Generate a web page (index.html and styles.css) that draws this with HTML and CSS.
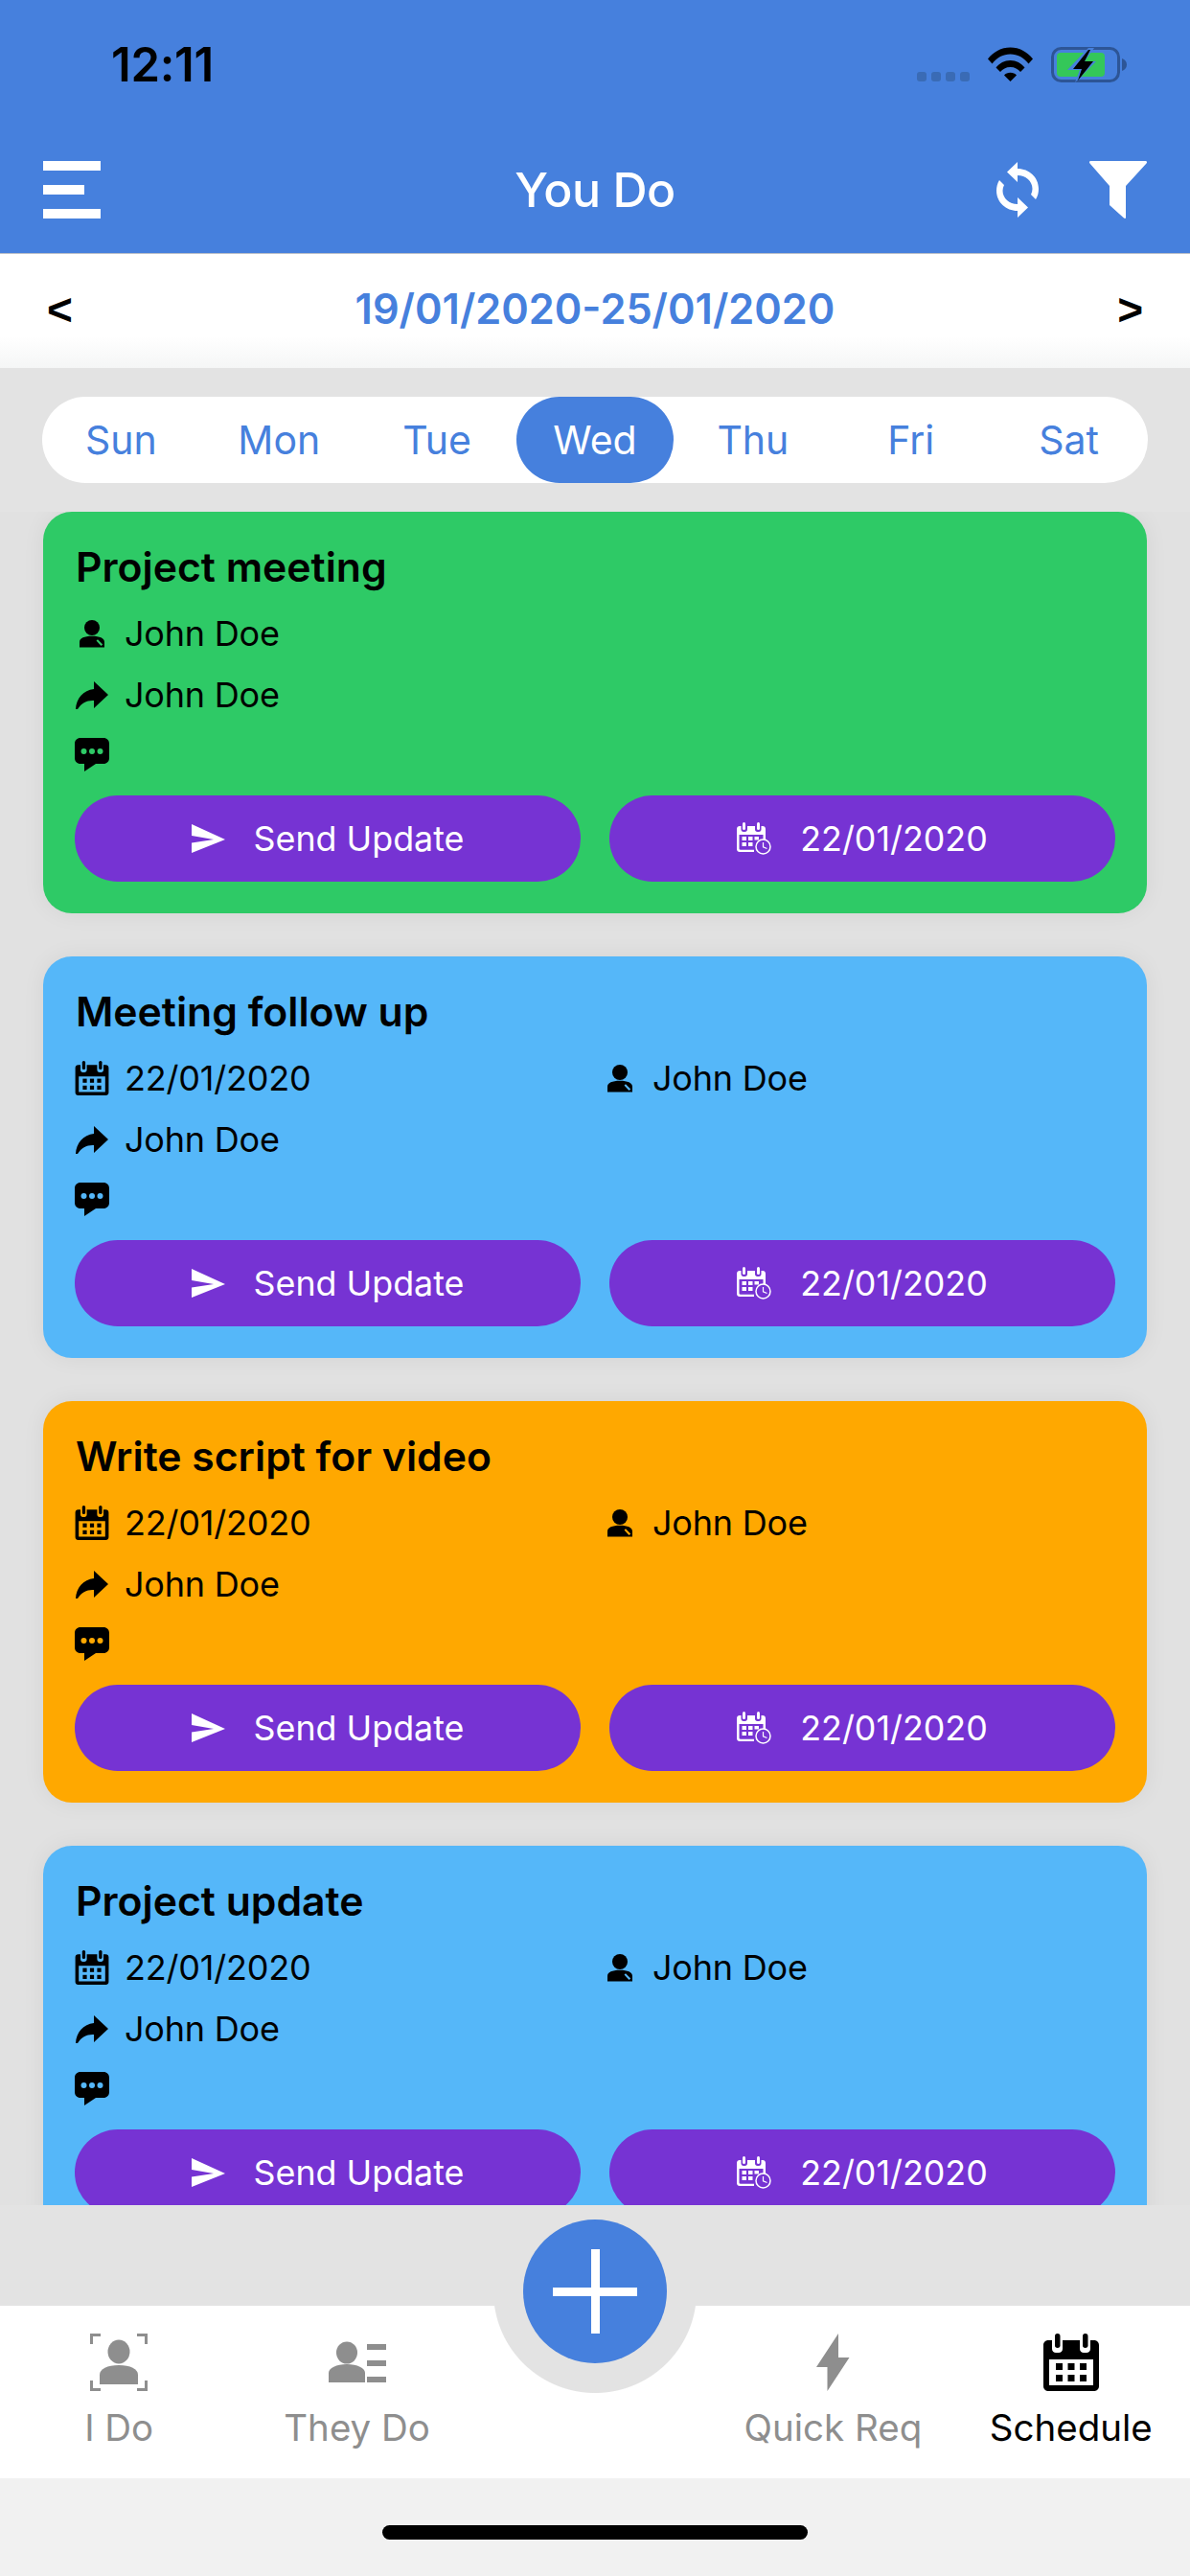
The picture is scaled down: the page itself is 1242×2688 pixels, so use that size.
FILE: index.html
```html
<!DOCTYPE html>
<html lang="en">
<head>
<meta charset="utf-8">
<title>You Do</title>
<link rel="stylesheet" href="styles.css">
</head>
<body>
<svg class="defs" width="0" height="0" aria-hidden="true">
  <symbol id="i-person" viewBox="0 0 26 29">
    <circle cx="13" cy="8" r="8"/>
    <path d="M0 28.500V23C0 19 5 16.800 13 16.800C21 16.800 26 19 26 23V28.500ZM17.500 21.500L22.500 27L24.200 25.500L19 20.200Z" fill-rule="evenodd"/>
  </symbol>
  <symbol id="i-forward" viewBox="0 0 34 29">
    <path d="M19 0L34 14L19 28V20C12 19.500 6 22.500 2 29H0C.5 18 8 9 19 8Z"/>
  </symbol>
  <symbol id="i-comment" viewBox="0 0 36 35">
    <path d="M6 0H30C33.500 0 36 2.500 36 6V21C36 24.500 33.500 27 30 27H22L10 35V27H6C2.500 27 0 24.500 0 21V6C0 2.500 2.500 0 6 0Z"/>
    <circle class="hole" cx="9.500" cy="14" r="3"/><circle class="hole" cx="18" cy="14" r="3"/><circle class="hole" cx="26.500" cy="14" r="3"/>
  </symbol>
  <symbol id="i-send" viewBox="0 0 35 30">
    <path d="M0 0L35 16L0 30V19.500L23 16L0 12Z"/>
  </symbol>
  <symbol id="i-cal" viewBox="0 0 58 60">
    <path d="M5 7H9V16C9 18.500 11 20 13 20H16C18 20 20 18.500 20 16V7H38V16C38 18.500 40 20 42 20H45C47 20 49 18.500 49 16V7H53C55.800 7 58 9.200 58 12V55C58 57.800 55.800 60 53 60H5C2.200 60 0 57.800 0 55V12C0 9.200 2.200 7 5 7ZM6 27V54H52V27Z" fill-rule="evenodd"/>
    <rect x="12" y="0" width="5.500" height="15" rx="2.700"/><rect x="41" y="0" width="5.500" height="15" rx="2.700"/>
    <rect x="13" y="31" width="7" height="7"/><rect x="25.500" y="31" width="7" height="7"/><rect x="38" y="31" width="7" height="7"/>
    <rect x="13" y="43" width="7" height="7"/><rect x="25.500" y="43" width="7" height="7"/><rect x="38" y="43" width="7" height="7"/>
  </symbol>
  <symbol id="i-calclock" viewBox="0 0 36 34">
    <path d="M3 4H4.500V7.500C4.500 9 5.500 10 7 10H8.500C10 10 11 9 11 7.500V4H19V7.500C19 9 20 10 21.500 10H23C24.500 10 25.500 9 25.500 7.500V4H27C28.700 4 30 5.300 30 7V18H27.500V13H2.500V27.500C2.500 28.300 3 28.700 3.800 28.700H18V31H3C1.300 31 0 29.700 0 28V7C0 5.300 1.300 4 3 4Z"/>
    <rect x="6" y="0" width="3" height="8" rx="1.500"/><rect x="21" y="0" width="3" height="8" rx="1.500"/>
    <rect x="5.500" y="15" width="4.500" height="4"/><rect x="12" y="15" width="4.500" height="4"/><rect x="18.500" y="15" width="4.500" height="3.500"/>
    <rect x="5.500" y="21" width="4.500" height="4"/><rect x="12" y="21" width="4.500" height="4"/>
    <circle cx="27.500" cy="25.500" r="7.500" class="hole" stroke="#fff" stroke-width="1.500"/>
    <path d="M27.500 21V25.800L31.500 27.500" fill="none" stroke="#fff" stroke-width="1.200"/>
  </symbol>
</svg>

<div class="app">
  <header class="topbar">
    <div class="status">
      <span class="clock">12:11</span>
      <div class="status-icons">
        <div class="signal"><i></i><i></i><i></i><i></i></div>
        <svg class="wifi" viewBox="0 0 47 36"><path d="M0 12.500C6 5 14 0.500 23.500 0.500S41 5 47 12.500L42.500 17.500C37.500 11 31 7.500 23.500 7.500S9.500 11 4.500 17.500Z"/><path d="M8.500 21.500C12 17 17.500 14 23.500 14S35 17 38.500 21.500L34 26C31.500 23 28 21 23.500 21S15.500 23 13 26Z"/><path d="M17 29.500C18.500 27.800 20.800 26.800 23.500 26.800S28.500 27.800 30 29.500L23.500 36Z"/></svg>
        <svg class="battery" viewBox="0 0 80 37"><rect x="1.500" y="1.500" width="69" height="34" rx="9" fill="none" stroke="#2d5596" stroke-width="3"/><path d="M74 12C77 13 79 15.500 79 18.500S77 24 74 25Z" fill="#2d5596"/><rect x="6" y="6" width="50" height="25" rx="4" fill="#34c759"/><path d="M36 1L14 24H27L22 37L44 15H32L42 1Z" fill="#4680dd" transform="translate(3 0)"/><path d="M39 3L23 23H32L28 35L44 15H35L41 3Z" fill="#000"/></svg>
      </div>
    </div>
    <div class="toolbar">
      <div class="toolbar-side"><div class="burger"><i></i><i></i><i></i></div></div>
      <h1 class="title">You Do</h1>
      <div class="toolbar-side tools">
        <svg class="refresh" viewBox="0 0 44 58"><path d="M22 0V7C34 7 44 16 44 28C44 32 43 36 41 39L36 34C37 32 37.500 30 37.500 28C37.500 20 30.500 14 22 14V21L11 10.500Z"/><path d="M22 58V51C10 51 0 42 0 30C0 26 1 22 3 19L8 24C7 26 6.500 28 6.500 30C6.500 38 13.500 44 22 44V37L33 47.500Z"/></svg>
        <svg class="funnel" viewBox="0 0 60 60"><path d="M1.500 0H58.500C60 0 60.500 1.500 59.500 2.500L38 26V59C38 60 37 60.300 36 59.500L21 46V26L.5 2.500C-.5 1.500 0 0 1.500 0Z"/></svg>
      </div>
    </div>
  </header>

  <div class="datebar">
    <span class="chev">&lt;</span>
    <span class="range">19/01/2020-25/01/2020</span>
    <span class="chev">&gt;</span>
  </div>

  <div class="days">
    <span class="day">Sun</span><span class="day">Mon</span><span class="day">Tue</span><span class="day is-on">Wed</span><span class="day">Thu</span><span class="day">Fri</span><span class="day">Sat</span>
  </div>

  <main class="list">
    <article class="card card-green">
      <h2 class="card-title">Project meeting</h2>
      <div class="row"><span class="cell"><svg class="ic ic-person"><use href="#i-person"/></svg>John Doe</span></div>
      <div class="row"><span class="cell"><svg class="ic ic-forward"><use href="#i-forward"/></svg>John Doe</span></div>
      <div class="note"><svg class="ic ic-comment"><use href="#i-comment"/></svg></div>
      <div class="actions">
        <button class="pill"><svg class="pill-ic ic-send"><use href="#i-send"/></svg>Send Update</button>
        <button class="pill"><svg class="pill-ic ic-calclock"><use href="#i-calclock"/></svg>22/01/2020</button>
      </div>
    </article>

    <article class="card card-blue">
      <h2 class="card-title">Meeting follow up</h2>
      <div class="row"><span class="cell cell-first"><svg class="ic ic-cal"><use href="#i-cal"/></svg>22/01/2020</span><span class="cell"><svg class="ic ic-person"><use href="#i-person"/></svg>John Doe</span></div>
      <div class="row"><span class="cell"><svg class="ic ic-forward"><use href="#i-forward"/></svg>John Doe</span></div>
      <div class="note"><svg class="ic ic-comment"><use href="#i-comment"/></svg></div>
      <div class="actions">
        <button class="pill"><svg class="pill-ic ic-send"><use href="#i-send"/></svg>Send Update</button>
        <button class="pill"><svg class="pill-ic ic-calclock"><use href="#i-calclock"/></svg>22/01/2020</button>
      </div>
    </article>

    <article class="card card-orange">
      <h2 class="card-title">Write script for video</h2>
      <div class="row"><span class="cell cell-first"><svg class="ic ic-cal"><use href="#i-cal"/></svg>22/01/2020</span><span class="cell"><svg class="ic ic-person"><use href="#i-person"/></svg>John Doe</span></div>
      <div class="row"><span class="cell"><svg class="ic ic-forward"><use href="#i-forward"/></svg>John Doe</span></div>
      <div class="note"><svg class="ic ic-comment"><use href="#i-comment"/></svg></div>
      <div class="actions">
        <button class="pill"><svg class="pill-ic ic-send"><use href="#i-send"/></svg>Send Update</button>
        <button class="pill"><svg class="pill-ic ic-calclock"><use href="#i-calclock"/></svg>22/01/2020</button>
      </div>
    </article>

    <article class="card card-blue">
      <h2 class="card-title">Project update</h2>
      <div class="row"><span class="cell cell-first"><svg class="ic ic-cal"><use href="#i-cal"/></svg>22/01/2020</span><span class="cell"><svg class="ic ic-person"><use href="#i-person"/></svg>John Doe</span></div>
      <div class="row"><span class="cell"><svg class="ic ic-forward"><use href="#i-forward"/></svg>John Doe</span></div>
      <div class="note"><svg class="ic ic-comment"><use href="#i-comment"/></svg></div>
      <div class="actions">
        <button class="pill"><svg class="pill-ic ic-send"><use href="#i-send"/></svg>Send Update</button>
        <button class="pill"><svg class="pill-ic ic-calclock"><use href="#i-calclock"/></svg>22/01/2020</button>
      </div>
    </article>
  </main>

  <nav class="tabs">
    <button class="fab" aria-label="Add"></button>
    <div class="tab">
      <svg class="tab-ic" width="60" height="60" viewBox="0 0 60 60"><path d="M0 0H11V3H3V11H0ZM49 0H60V11H57V3H49ZM0 49H3V57H11V60H0ZM57 49H60V60H49V57H57Z"/><ellipse cx="30" cy="19" rx="11.500" ry="12.500"/><path d="M10 53V43C10 37 18 33 30 33S50 37 50 43V53Z"/></svg>
      <span class="tab-label">I Do</span>
    </div>
    <div class="tab">
      <svg class="tab-ic" width="60" height="60" viewBox="0 0 60 60"><ellipse cx="19" cy="20" rx="11" ry="11.500"/><path d="M0 51V41C0 36 8 32 19 32S38 36 38 41V51Z"/><rect x="40" y="11" width="20" height="6"/><rect x="40" y="28" width="20" height="6"/><rect x="40" y="45" width="20" height="6"/></svg>
      <span class="tab-label">They Do</span>
    </div>
    <div class="tab tab-gap"></div>
    <div class="tab">
      <svg class="tab-ic" width="60" height="60" viewBox="0 0 60 60"><path d="M53 0V25H64.500L41.500 60V35H30Z" transform="translate(-17 0)"/></svg>
      <span class="tab-label">Quick Req</span>
    </div>
    <div class="tab is-on">
      <svg class="tab-ic" width="58" height="60"><use href="#i-cal"/></svg>
      <span class="tab-label">Schedule</span>
    </div>
  </nav>

  <footer class="homebar"><span class="indicator"></span></footer>
</div>
</body>
</html>
```

FILE: styles.css
```css
* { box-sizing: border-box; }

html, body {
  margin: 0;
  padding: 0;
}

body {
  width: 1242px;
  height: 2688px;
  overflow: hidden;
  background: #e3e3e3;
  font-family: Inter, Roboto, "Liberation Sans", sans-serif;
  color: #000;
}

.defs { position: absolute; }

.app {
  display: flex;
  flex-direction: column;
  width: 1242px;
  height: 2688px;
}

/* header */
.topbar {
  flex: 0 0 265px;
  height: 265px;
  background: #4680dd;
  border-bottom: 1px solid #b9bfc9;
  padding: 40px 45px 0;
}

.status {
  display: flex;
  justify-content: space-between;
  align-items: flex-start;
  height: 128px;
  padding-left: 71px;
}

.clock {
  font-size: 49px;
  line-height: 56px;
  font-weight: 600;
  letter-spacing: -0.3px;
}

.status-icons {
  display: flex;
  align-items: flex-start;
  padding-top: 9px;
  margin-right: 20px;
}

.signal {
  display: flex;
  gap: 5px;
  margin-top: 26px;
  margin-right: 19px;
}

.signal i {
  width: 10px;
  height: 10px;
  border-radius: 3px;
  background: #3a6bb5;
}

.wifi { width: 47px; height: 36px; fill: #000; margin-right: 19px; }
.battery { width: 80px; height: 37px; }

.toolbar {
  display: flex;
  align-items: center;
  height: 60px;
}

.toolbar-side { flex: 1; }

.burger {
  display: flex;
  flex-direction: column;
  gap: 15px;
  width: 60px;
}

.burger i {
  display: block;
  height: 10px;
  background: #fff;
}

.burger i:nth-child(2) { width: 43px; }

.title {
  margin: 0;
  font-size: 50px;
  line-height: 60px;
  font-weight: 500;
  color: #fff;
  letter-spacing: -0.5px;
}

.tools {
  display: flex;
  justify-content: flex-end;
  align-items: center;
  gap: 53px;
}

.refresh { width: 44px; height: 58px; fill: #fff; }
.funnel { width: 60px; height: 60px; fill: #fff; }

/* date range */
.datebar {
  flex: 0 0 119px;
  display: flex;
  justify-content: space-between;
  align-items: center;
  padding: 0 49px 6px;
  background: linear-gradient(#fff 0, #fff 72%, #f5f6f6 100%);
}

.range {
  font-size: 43.300px;
  font-weight: 600;
  color: #4680dd;
}

.chev {
  font-family: "Liberation Sans", sans-serif;
  font-size: 46px;
  font-weight: 700;
  margin-top: 2px;
}

/* day picker */
.days {
  display: grid;
  grid-template-columns: repeat(7, 1fr);
  align-items: center;
  height: 90px;
  margin: 30px 44px;
  background: #fff;
  border-radius: 45px;
}

.day {
  display: flex;
  justify-content: center;
  align-items: center;
  height: 90px;
  font-size: 41px;
  color: #4680dd;
  border-radius: 45px;
}

.day.is-on {
  background: #4680dd;
  color: #fff;
}

/* cards */
.list {
  flex: 0 0 1767px;
  height: 1767px;
  overflow: hidden;
  background: #e1e1e1;
  padding: 0 45px;
}

.card {
  height: 419px;
  margin-bottom: 45px;
  padding: 33px 33px 33px;
  border-radius: 30px;
  box-shadow: 0 0 24px rgba(0, 0, 0, 0.06);
}

.card-green { background: #2eca66; }
.card-blue { background: #55b7f9; }
.card-orange { background: #ffa800; }

.card-green .ic { color: #2eca66; }
.card-blue .ic { color: #55b7f9; }
.card-orange .ic { color: #ffa800; }

.card-title {
  margin: 0 0 12px 1px;
  font-size: 42.700px;
  line-height: 50px;
  font-weight: 600;
}

.row {
  display: flex;
  height: 64px;
  align-items: center;
  font-size: 36px;
  letter-spacing: -0.2px;
}

.cell {
  display: flex;
  align-items: center;
  gap: 16px;
}

.cell-first { flex: 0 0 551px; }

.ic { flex: 0 0 36px; width: 36px; fill: #000; }
.ic-person { height: 29px; }
.ic-forward { height: 29px; }
.ic-cal { height: 36px; }
.ic-comment { height: 35px; }
.hole { fill: currentColor; }

.note {
  height: 73px;
  padding-top: 13px;
}

.actions {
  display: grid;
  grid-template-columns: 1fr 1fr;
  gap: 30px;
}

.pill {
  display: flex;
  justify-content: center;
  align-items: center;
  gap: 30px;
  height: 90px;
  padding: 0;
  border: 0;
  border-radius: 45px;
  background: #7633d3;
  color: #fff;
  font: inherit;
  font-size: 35.800px;
}

.pill-ic { fill: #fff; color: #7633d3; }
.ic-send { width: 35px; height: 30px; }
.ic-calclock { width: 36px; height: 34px; }

/* tab bar */
.tabs {
  position: relative;
  flex: 0 0 285px;
  height: 285px;
  display: grid;
  grid-template-columns: repeat(5, 1fr);
  padding: 134px 0 0;
  background:
    radial-gradient(circle 107px at 621px 90px, #e3e3e3 105.5px, rgba(227, 227, 227, 0) 106.5px) no-repeat,
    linear-gradient(#e3e3e3 0, #e3e3e3 105px, #fff 105px);
}

.fab {
  position: absolute;
  left: 546px;
  top: 15px;
  width: 150px;
  height: 150px;
  padding: 0;
  border: 0;
  border-radius: 50%;
  background:
    linear-gradient(#fff, #fff) center / 88px 9px no-repeat,
    linear-gradient(#fff, #fff) center / 9px 88px no-repeat,
    #4680dd;
}

.tab {
  display: flex;
  flex-direction: column;
  align-items: center;
  color: #8e8e8e;
}

.tab.is-on { color: #000; }
.tab-ic { fill: currentColor; }

.tab-label {
  margin-top: 13px;
  font-size: 38.500px;
  line-height: 50px;
}

.homebar {
  flex: 1;
  display: flex;
  justify-content: center;
  align-items: center;
  background: #f1f1f1;
  margin-top: -1px;
}

.indicator {
  position: relative;
  top: 6px;
  width: 444px;
  height: 15px;
  border-radius: 8px;
  background: #000;
}
```
